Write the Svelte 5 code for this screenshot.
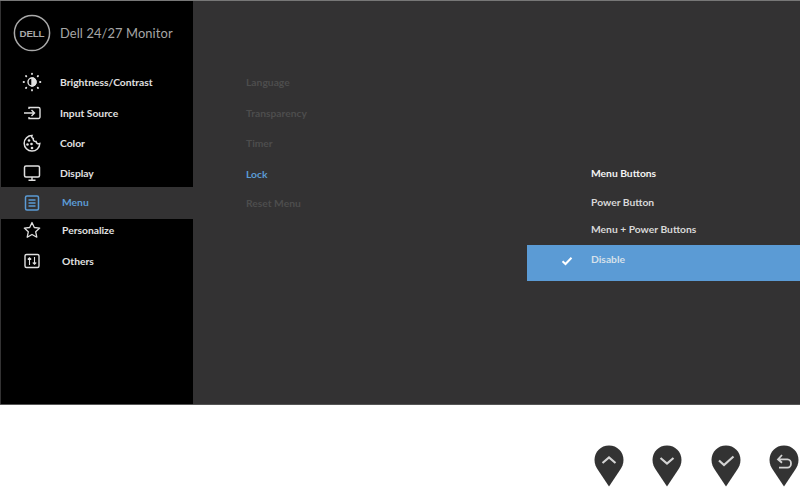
<script>
  const nav = [
    { label: 'Brightness/Contrast', h: 30, cls: '' },
    { label: 'Input Source', h: 31, cls: '' },
    { label: 'Color', h: 30, cls: '' },
    { label: 'Display', h: 29, cls: '' },
    { label: 'Menu', h: 32, cls: 'active shift' },
    { label: 'Personalize', h: 22, cls: 'shift' },
    { label: 'Others', h: 40, cls: 'shift' }
  ];
  const mid = [
    { label: 'Language', h: 31 },
    { label: 'Transparency', h: 31 },
    { label: 'Timer', h: 30 },
    { label: 'Lock', h: 31, on: true },
    { label: 'Reset Menu', h: 28 }
  ];
  const pins = ['up', 'down', 'check', 'back'];
</script>

<div class="page">
  <section class="monitor">
    <aside class="side">
      <header class="brand">
        <svg class="logo" viewBox="0 0 38 38" width="38" height="38">
          <circle cx="19" cy="19" r="17.6" fill="none" stroke="#a9a9a9" stroke-width="1.5" />
          <text x="19" y="22.500" text-anchor="middle" class="logotext">DELL</text>
        </svg>
        <span class="title">Dell 24/27 Monitor</span>
      </header>
      {#each nav as item, i}
        <div class="row {item.cls}" style="height:{item.h}px">
          <svg class="ico" viewBox="0 0 20 20" width="20" height="20" fill="none" stroke="currentColor" stroke-width="1.4">
            {#if i === 0}
              <circle cx="10" cy="10" r="4" />
              <path d="M10 6a4 4 0 0 1 0 8z" fill="currentColor" />
              <path stroke-width="1.800" stroke-linecap="round" d="M10 1.600v.4M10 18v.4M1.600 10h.4M18 10h.4M4 4l.3.3M15.700 15.700l.3.3M4 16l.3-.3M15.700 4.300l.3-.3" />
            {:else if i === 1}
              <path d="M7 6V4.500h9.500a1.500 1.500 0 0 1 1.500 1.500v8a1.500 1.500 0 0 1-1.500 1.500H7V14" />
              <path d="M2 10h10M9.500 7l3 3-3 3" />
            {:else if i === 2}
              <path d="M10 2.500a7.800 7.800 0 1 0 7.800 8c-2 .8-3.500-.2-3.700-1.900-1.900.2-3.300-1.400-2.800-3.200-1.500-.2-1.900-1.700-1.300-2.900z" stroke-width="1.500" />
              <circle cx="7" cy="7.500" r="1.300" fill="currentColor" stroke="none" />
              <circle cx="5.500" cy="11.500" r="1.300" fill="currentColor" stroke="none" />
              <circle cx="9.500" cy="11" r="1.300" fill="currentColor" stroke="none" />
              <circle cx="10" cy="15" r="1.300" fill="currentColor" stroke="none" />
            {:else if i === 3}
              <rect x="2.500" y="3" width="15" height="11" rx="1.500" stroke-width="1.500" />
              <path d="M10 14v3M6.500 17.300h7" />
            {:else if i === 4}
              <rect x="3.500" y="3" width="13" height="14" rx="1.500" stroke-width="1.500" />
              <path d="M6.500 7h7M6.500 10h7M6.500 13h7" stroke-width="1.300" />
            {:else if i === 5}
              <path d="M10 2.500l2.300 5 5.400.6-4 3.700 1.100 5.400-4.800-2.700-4.800 2.700 1.100-5.400-4-3.700 5.400-.6z" stroke-width="1.300" stroke-linejoin="round" />
            {:else}
              <rect x="3" y="3.500" width="14" height="13" rx="1.500" />
              <path d="M7.500 14V7M5.800 8.500l1.700-1.800 1.700 1.800M12.500 6v7M10.800 11.500l1.700 1.800 1.700-1.800" stroke-width="1.100" />
            {/if}
          </svg>
          <span>{item.label}</span>
        </div>
      {/each}
    </aside>

    <div class="content">
      <div class="mid">
        {#each mid as m}
          <div class="mrow" class:on={m.on} style="height:{m.h}px">{m.label}</div>
        {/each}
      </div>
      <div class="opts">
        <div class="opt first">Menu Buttons</div>
        <div class="opt second">Power Button</div>
        <div class="opt third">Menu + Power Buttons</div>
        <div class="opt sel">
          <svg class="tick" viewBox="0 0 12 10" width="12" height="10"><path d="M1.500 5.200l3 2.800 6-6.200" fill="none" stroke="#fff" stroke-width="2" /></svg>
          <span>Disable</span>
        </div>
      </div>
    </div>
  </section>

  <footer class="keys">
    {#each pins as p}
      <svg class="pin" viewBox="0 0 30 42" width="30" height="42">
        <path d="M15 .5C6.800.5.500 6.800.5 15c0 4 1.500 7 3.500 10l11 16.500L26 25c2-3 3.500-6 3.500-10C29.500 6.800 23.200.5 15 .5z" fill="#333" />
        {#if p === 'up'}
          <path d="M8.500 18l6.500-5.500 6.500 5.500" fill="none" stroke="#d4d4d4" stroke-width="2.200" />
        {:else if p === 'down'}
          <path d="M8.500 13l6.500 5.500 6.500-5.500" fill="none" stroke="#d4d4d4" stroke-width="2.200" />
        {:else if p === 'check'}
          <path d="M8 15.500l5 4.500 9.500-8.500" fill="none" stroke="#d4d4d4" stroke-width="2.200" />
        {:else}
          <path d="M13 10l-4 4.300 4 3.400M9 14.300h9.500c2 0 3.500 1.800 3.500 4.200s-1.500 4.200-3.500 4.200H10" fill="none" stroke="#d4d4d4" stroke-width="1.800" />
        {/if}
      </svg>
    {/each}
  </footer>
</div>

<style>
  :global(body) {
    margin: 0;
    background: #fff;
  }
  .page {
    width: 800px;
    height: 488px;
    overflow: hidden;
    font-family: Lato, "Open Sans", sans-serif;
    font-size: 10.300px;
    display: flex;
    flex-direction: column;
  }
  .monitor {
    flex: none;
    display: flex;
    background: #333233;
    border-top: 1px solid #777;
    border-bottom: 1px solid #555;
    height: 403px;
  }
  .side {
    width: 192px;
    margin-left: 1px;
    background: #000;
    color: #e0e0e0;
    flex: none;
  }
  .brand {
    height: 66px;
    display: flex;
    align-items: center;
    gap: 9px;
    padding: 0 0 2px 12px;
    box-sizing: border-box;
    color: #a6a6a6;
    font-size: 12.900px;
    letter-spacing: 0.100px;
  }
  .logo {
    flex: none;
  }
  .logotext {
    font-size: 9.800px;
    font-weight: 700;
    fill: #a9a9a9;
    letter-spacing: -0.200px;
    font-family: "Liberation Sans", sans-serif;
  }
  .row {
    display: flex;
    align-items: center;
    padding-left: 21px;
    gap: 18px;
    font-weight: 700;
  }
  .row.shift {
    gap: 20px;
  }
  .row.active {
    background: #333233;
    color: #5b9bd5;
  }
  .row.active span {
    margin-bottom: 2px;
  }
  .ico {
    flex: none;
  }
  .content {
    flex: 1;
    display: flex;
  }
  .mid {
    width: 334px;
    padding: 65px 0 0 53px;
    box-sizing: border-box;
    color: #4d4d4d;
    font-weight: 700;
  }
  .mrow {
    display: flex;
    align-items: center;
  }
  .mrow.on {
    color: #5b9bd5;
  }
  .opts {
    flex: 1;
    padding-top: 157px;
    color: #d8d8d8;
    font-weight: 700;
  }
  .opt {
    padding-left: 64px;
    display: flex;
    align-items: center;
  }
  .first {
    height: 30px;
    color: #f4f4f4;
  }
  .second {
    height: 28px;
  }
  .third {
    height: 25px;
    margin-bottom: 4px;
  }
  .sel {
    height: 36px;
    background: #5b9bd5;
    padding-left: 34px;
    gap: 18px;
    color: #d5e0ea;
  }
  .sel span {
    margin-bottom: 8px;
  }
  .tick {
    flex: none;
    margin-bottom: 4px;
  }
  .keys {
    flex: 1;
    display: flex;
    gap: 28.500px;
    justify-content: flex-end;
    padding: 40px 1px 0 0;
    box-sizing: border-box;
  }
  .pin {
    flex: none;
  }
</style>
